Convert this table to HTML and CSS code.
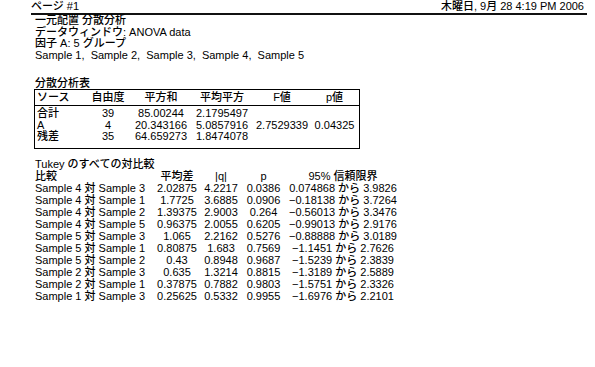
FILE: index.html
```html
<!DOCTYPE html>
<html lang="ja">
<head>
<meta charset="utf-8">
<title>一元配置 分散分析</title>
<link rel="stylesheet" href="styles.css">
</head>
<body>
<div class="page">
  <div class="header">
    <span>ページ #1</span>
    <span>木曜日, 9月 28 4:19 PM 2006</span>
  </div>
  <div class="info">
    <div>一元配置 分散分析</div>
    <div>データウィンドウ: ANOVA data</div>
    <div>因子 A: 5 グループ</div>
    <div>Sample 1,&nbsp; Sample 2,&nbsp; Sample 3,&nbsp; Sample 4,&nbsp; Sample 5</div>
  </div>

  <div class="section-title">分散分析表</div>
  <table class="anova">
    <colgroup>
      <col class="c1"><col class="c2"><col class="c3"><col class="c4"><col class="c5"><col class="c6">
    </colgroup>
    <thead>
      <tr><th class="left">ソース</th><th>自由度</th><th>平方和</th><th>平均平方</th><th>F値</th><th>p値</th></tr>
    </thead>
    <tbody>
      <tr class="first"><td class="left">合計</td><td>39</td><td>85.00244</td><td>2.1795497</td><td></td><td></td></tr>
      <tr><td class="left">A</td><td>4</td><td>20.343166</td><td>5.0857916</td><td>2.7529339</td><td>0.04325</td></tr>
      <tr class="last"><td class="left">残差</td><td>35</td><td>64.659273</td><td>1.8474078</td><td></td><td></td></tr>
    </tbody>
  </table>

  <div class="tukey-title">Tukey のすべての対比較</div>
  <table class="tukey">
    <colgroup>
      <col class="t1"><col class="t2"><col class="t3"><col class="t4"><col class="t5">
    </colgroup>
    <thead>
      <tr><th class="left">比較</th><th>平均差</th><th>|q|</th><th>p</th><th>95% 信頼限界</th></tr>
    </thead>
    <tbody>
      <tr><td class="left">Sample 4 対 Sample 3</td><td>2.02875</td><td>4.2217</td><td>0.0386</td><td>0.074868 から 3.9826</td></tr>
      <tr><td class="left">Sample 4 対 Sample 1</td><td>1.7725</td><td>3.6885</td><td>0.0906</td><td>−0.18138 から 3.7264</td></tr>
      <tr><td class="left">Sample 4 対 Sample 2</td><td>1.39375</td><td>2.9003</td><td>0.264</td><td>−0.56013 から 3.3476</td></tr>
      <tr><td class="left">Sample 4 対 Sample 5</td><td>0.96375</td><td>2.0055</td><td>0.6205</td><td>−0.99013 から 2.9176</td></tr>
      <tr><td class="left">Sample 5 対 Sample 3</td><td>1.065</td><td>2.2162</td><td>0.5276</td><td>−0.88888 から 3.0189</td></tr>
      <tr><td class="left">Sample 5 対 Sample 1</td><td>0.80875</td><td>1.683</td><td>0.7569</td><td>−1.1451 から 2.7626</td></tr>
      <tr><td class="left">Sample 5 対 Sample 2</td><td>0.43</td><td>0.8948</td><td>0.9687</td><td>−1.5239 から 2.3839</td></tr>
      <tr><td class="left">Sample 2 対 Sample 3</td><td>0.635</td><td>1.3214</td><td>0.8815</td><td>−1.3189 から 2.5889</td></tr>
      <tr><td class="left">Sample 2 対 Sample 1</td><td>0.37875</td><td>0.7882</td><td>0.9803</td><td>−1.5751 から 2.3326</td></tr>
      <tr><td class="left">Sample 1 対 Sample 3</td><td>0.25625</td><td>0.5332</td><td>0.9955</td><td>−1.6976 から 2.2101</td></tr>
    </tbody>
  </table>
</div>
</body>
</html>
```

FILE: styles.css
```css
html, body {
  margin: 0;
  padding: 0;
  background: #fff;
}

body {
  font-family: "Liberation Sans", "Noto Sans CJK JP", sans-serif;
  font-size: 11px;
  font-weight: 500;
  color: #000;
}

.page {
  padding-left: 31px;
  width: 556px;
}

.header {
  display: flex;
  justify-content: space-between;
  padding-top: 1px;
  padding-right: 3px;
  line-height: 11px;
  height: 12px;
  border-bottom: 2px solid #111;
}

.info {
  margin-left: 4px;
  line-height: 11.6px;
}

.section-title {
  margin-left: 4px;
  margin-top: 16px;
  line-height: 12px;
}

.anova {
  margin-left: 3px;
  border: 1px solid #000;
  border-spacing: 0;
  border-collapse: separate;
  table-layout: fixed;
  width: 326px;
}

.anova .c1 { width: 49px; }
.anova .c2 { width: 48px; }
.anova .c3 { width: 58px; }
.anova .c4 { width: 64px; }
.anova .c5 { width: 56px; }
.anova .c6 { width: 49px; }

.anova th,
.anova td {
  padding: 0;
  font-weight: 500;
  text-align: center;
  white-space: nowrap;
}

.anova th {
  height: 15px;
  line-height: 15px;
  border-bottom: 1px solid #000;
}

.anova td {
  line-height: 11.5px;
}

.anova .left {
  text-align: left;
  padding-left: 2px;
}

.anova .first td { padding-top: 2px; }
.anova .last td { padding-bottom: 5px; }

.tukey-title {
  margin-left: 4px;
  margin-top: 9px;
  line-height: 12px;
}

.tukey {
  margin-left: 4px;
  border-spacing: 0;
  table-layout: fixed;
  width: 367px;
}

.tukey .t1 { width: 120px; }
.tukey .t2 { width: 44px; }
.tukey .t3 { width: 44px; }
.tukey .t4 { width: 41px; }
.tukey .t5 { width: 118px; }

.tukey th,
.tukey td {
  padding: 0;
  font-weight: 500;
  text-align: center;
  white-space: nowrap;
  line-height: 12px;
}

.tukey .left {
  text-align: left;
}
```
